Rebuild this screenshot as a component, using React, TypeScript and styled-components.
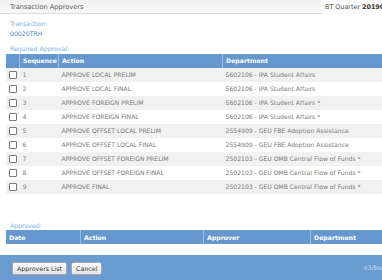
import React from "react";
import styled, { createGlobalStyle } from "styled-components";

const Global = createGlobalStyle`
  html, body { margin: 0; padding: 0; overflow: hidden; background: #fff; }
  body { font-family: "DejaVu Sans", Verdana, sans-serif; font-size: 6.2px; color: #666; }
`;

const Page = styled.div`
  width: 400px;
  height: 280px;
  display: flex;
  flex-direction: column;
`;

const TopBar = styled.div`
  display: flex;
  height: 14px;
`;

const TitleCell = styled.div`
  flex: 0 0 322px;
  display: flex;
  align-items: center;
  padding-left: 10px;
  box-sizing: border-box;
  background: linear-gradient(#f2f2f2, #f7f7f7);
  border-bottom: 1px solid #dcdcdc;
  color: #555;
  font-size: 6.6px;
`;

const QuarterCell = styled.div`
  flex: 1;
  display: flex;
  align-items: center;
  padding-left: 3px;
  background: #fbfbfb;
  color: #555;
  font-size: 6.4px;
  white-space: nowrap;
  b { font-weight: bold; margin-left: 2px; color: #333; }
`;

const Content = styled.div`
  flex: 1;
  padding: 5px 0 0 6px;
  display: flex;
  flex-direction: column;
`;

const Label = styled.div<{ $dark?: boolean }>`
  color: ${(p) => (p.$dark ? "#3f7fc0" : "#74b4e4")};
  font-size: 6.2px;
  line-height: 9.5px;
  padding-left: 4px;
`;

const Spacer = styled.div<{ $h: number }>`
  height: ${(p) => p.$h}px;
`;

const Table = styled.table`
  border-collapse: collapse;
  table-layout: fixed;
  width: 394px;
`;

const Th = styled.th<{ $w?: number }>`
  width: ${(p) => (p.$w ? `${p.$w}px` : "auto")};
  height: 14px;
  padding: 0 0 0 3px;
  background: #6698cf;
  color: #fff;
  font-weight: bold;
  text-align: left;
  font-size: 6.2px;
  border-left: 1px solid #9cbde2;
  &:first-child { border-left: none; }
`;

const Tr = styled.tr<{ $odd: boolean }>`
  background: ${(p) => (p.$odd ? "#f1f1f1" : "#fff")};
`;

const Td = styled.td`
  height: 14px;
  padding: 0 0 0 3px;
  color: #7a7a7a;
  font-size: 6.1px;
  white-space: nowrap;
  overflow: hidden;
`;

const Box = styled.span`
  display: block;
  width: 6px;
  height: 6px;
  border: 1px solid #777;
  background: #fff;
  border-radius: 1px;
`;

const EmptyRow = styled.tr`
  height: 11px;
`;

const Footer = styled.div`
  height: 25px;
  background: #6a9bd1;
  display: flex;
  align-items: center;
  padding: 0 0 0 12px;
  gap: 4px;
`;

const Button = styled.button`
  font-family: "DejaVu Sans", Verdana, sans-serif;
  font-size: 6.3px;
  color: #333;
  height: 13px;
  padding: 0 4px;
  border: 1px solid #a8a8a8;
  border-radius: 2px;
  background: linear-gradient(#fbfbfb, #e6e6e6);
  margin-top: 2px;
`;

const Version = styled.div`
  margin-left: auto;
  color: #d6e4f4;
  font-family: "DejaVu Serif", serif;
  font-size: 6.4px;
  white-space: nowrap;
  width: 36px;
`;

const rows = [
  ["1", "APPROVE LOCAL PRELIM", "5602106 - IPA Student Affairs"],
  ["2", "APPROVE LOCAL FINAL", "5602106 - IPA Student Affairs"],
  ["3", "APPROVE FOREIGN PRELIM", "5602106 - IPA Student Affairs *"],
  ["4", "APPROVE FOREIGN FINAL", "5602106 - IPA Student Affairs *"],
  ["5", "APPROVE OFFSET LOCAL PRELIM", "2554909 - GEU FBE Adoption Assistance"],
  ["6", "APPROVE OFFSET LOCAL FINAL", "2554909 - GEU FBE Adoption Assistance"],
  ["7", "APPROVE OFFSET FOREIGN PRELIM", "2502103 - GEU OMB Central Flow of Funds *"],
  ["8", "APPROVE OFFSET FOREIGN FINAL", "2502103 - GEU OMB Central Flow of Funds *"],
  ["9", "APPROVE FINAL", "2502103 - GEU OMB Central Flow of Funds *"],
];

export default function App() {
  return (
    <>
      <Global />
      <Page>
        <TopBar>
          <TitleCell>Transaction Approvers</TitleCell>
          <QuarterCell>
            BT Quarter<b>2019Q1</b>
          </QuarterCell>
        </TopBar>
        <Content>
          <Label>Transaction:</Label>
          <Label $dark>00020TRH</Label>
          <Spacer $h={6} />
          <Label>Required Approval:</Label>
          <Table>
            <thead>
              <tr>
                <Th $w={10}></Th>
                <Th $w={35}>Sequence</Th>
                <Th $w={160}>Action</Th>
                <Th>Department</Th>
              </tr>
            </thead>
            <tbody>
              {rows.map((r, i) => (
                <Tr key={r[0]} $odd={i % 2 === 0}>
                  <Td>
                    <Box />
                  </Td>
                  <Td>{r[0]}</Td>
                  <Td>{r[1]}</Td>
                  <Td>{r[2]}</Td>
                </Tr>
              ))}
            </tbody>
          </Table>
          <Spacer $h={27} />
          <Label>Approved:</Label>
          <Table>
            <thead>
              <tr>
                <Th $w={71}>Date</Th>
                <Th $w={119}>Action</Th>
                <Th $w={103}>Approver</Th>
                <Th>Department</Th>
              </tr>
            </thead>
            <tbody>
              <EmptyRow />
            </tbody>
          </Table>
        </Content>
        <Footer>
          <Button>Approvers List</Button>
          <Button>Cancel</Button>
          <Version>v3/build</Version>
        </Footer>
      </Page>
    </>
  );
}
